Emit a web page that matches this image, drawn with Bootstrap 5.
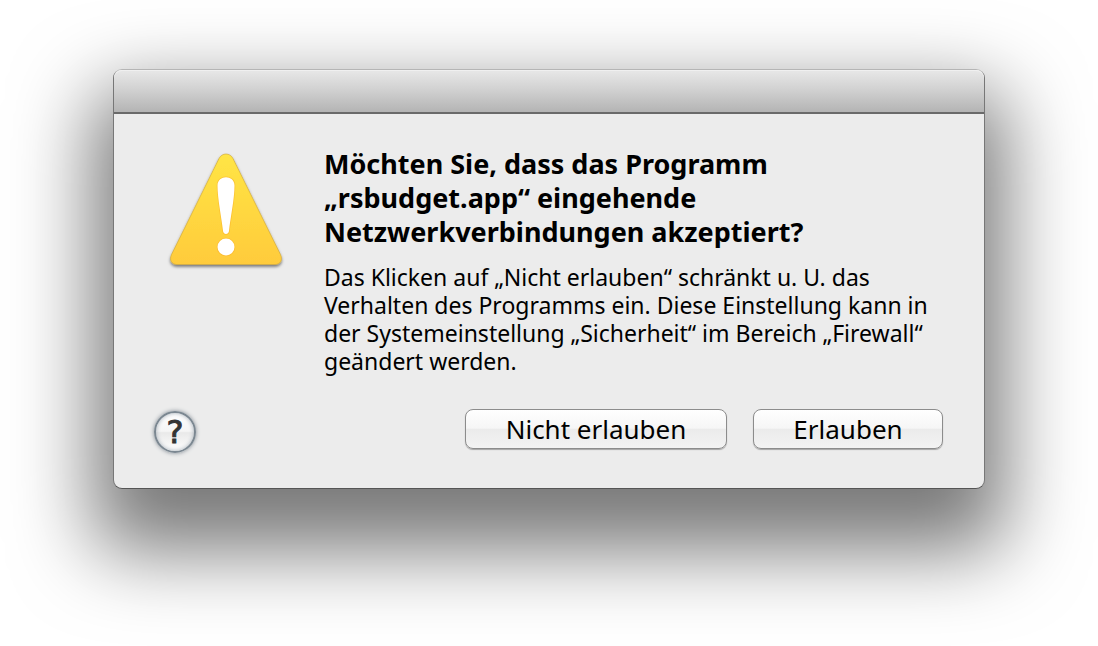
<!DOCTYPE html>
<html lang="de">
<head>
<meta charset="utf-8">
<meta name="viewport" content="width=device-width, initial-scale=1">
<title>Firewall</title>
<link href="https://cdn.jsdelivr.net/npm/bootstrap@5.3.0/dist/css/bootstrap.min.css" rel="stylesheet">
<style>
  body { font-family: "Noto Sans", "Open Sans", sans-serif; color: #000; background: #fff; overflow-x: hidden; }
  .stage { padding: 69px 16px 157px; }
  .alert-window {
    max-width: 872px;
    background: #ececec;
    border: 1px solid #777;
    border-top-color: #b5b5b5;
    border-bottom-color: #555;
    border-radius: 9px;
    box-shadow: 0 42px 80px 20px rgba(0, 0, 0, .53);
  }
  .title-strip {
    height: 44px;
    background: linear-gradient(#e8e8e8, #d2d2d2 45%, #b4b4b4);
    border-bottom: 2px solid #6a6a6a;
    border-radius: 8px 8px 0 0;
    box-shadow: inset 0 1px 0 #f0f0f0;
  }
  .alert-content { padding: 33px 41px 35px 40px; }
  .icon-col { width: 144px; margin-right: 26px; }
  .alert-title { font-size: 27px; line-height: 34px; font-weight: 700; max-width: 500px; margin-bottom: 14px; }
  .alert-text { font-size: 23px; line-height: 28px; margin-bottom: 34px; }
  .push {
    height: 40px;
    padding: 0 36px;
    font-size: 26px;
    line-height: 36px;
    color: #000;
    background: linear-gradient(#fff, #f6f6f6 48%, #ebebeb 50%, #f3f3f3);
    border: 1px solid #8c8c8c;
    border-radius: 8px;
    box-shadow: 0 1px 1px rgba(0, 0, 0, .3);
  }
  .push-wide { min-width: 262px; }
  .push-short { min-width: 190px; }
  .actions { gap: 26px; }
  .help {
    width: 42px;
    height: 42px;
    margin-top: 2px;
    font-family: "DejaVu Sans", sans-serif;
    font-size: 32px;
    line-height: 38px;
    color: #333;
    -webkit-text-stroke: 1px #333;
    background: linear-gradient(#fff, #f5f5f5 48%, #e9e9e9 52%, #fff);
    border: 2px solid #7b8791;
    box-shadow: 0 0 4px #7d8790, inset 0 0 4px #a4aeb8;
  }
</style>
</head>
<body>
<main class="stage">
  <section class="alert-window mx-auto" role="alertdialog" aria-labelledby="title" aria-describedby="text">
    <div class="title-strip"></div>
    <div class="alert-content">
      <div class="d-flex align-items-start">
        <div class="icon-col flex-shrink-0 text-center">
          <svg width="128" height="128" viewBox="0 0 128 128" aria-hidden="true">
            <defs>
              <linearGradient id="yellow" x1="0" y1="0" x2="0" y2="1"><stop offset="0" stop-color="#ffe545"/><stop offset="1" stop-color="#ffcb3b"/></linearGradient>
              <filter id="drop" x="-10%" y="-10%" width="120%" height="120%"><feDropShadow dx="0" dy="2" stdDeviation="1.5" flood-color="#000" flood-opacity=".5"/></filter>
            </defs>
            <path d="M57 11.500C60 5.500 68 5.500 71 11.500L118.500 107.500C121 113 118.500 117.500 113 117.500H15C9.500 117.500 7 113 9.500 107.500Z" fill="url(#yellow)" stroke="#cda536" stroke-width=".6" filter="url(#drop)"/>
            <g fill="#fff" stroke="#f9ad25" stroke-opacity=".55" stroke-width="1.500" paint-order="stroke">
              <path d="M55.500 38.500C55.500 27.500 72.500 27.500 72.500 38.500C72.500 52 68.500 70 67 84C66.500 88 61.500 88 61 84C59.500 70 55.500 52 55.500 38.500Z"/>
              <circle cx="64" cy="100" r="8.500"/>
            </g>
          </svg>
        </div>
        <div>
          <h1 class="alert-title" id="title">Möchten Sie, dass das Programm „rsbudget.app“ eingehende Netzwerkverbindungen akzeptiert?</h1>
          <p class="alert-text" id="text">Das Klicken auf „Nicht erlauben“ schränkt u. U. das Verhalten des Programms ein. Diese Einstellung kann in der Systemeinstellung „Sicherheit“ im Bereich „Firewall“ geändert werden.</p>
        </div>
      </div>
      <div class="d-flex align-items-start justify-content-between">
        <button type="button" class="help rounded-circle p-0" aria-label="Hilfe">?</button>
        <div class="actions d-flex flex-wrap justify-content-end">
          <button type="button" class="push push-wide">Nicht erlauben</button>
          <button type="button" class="push push-short">Erlauben</button>
        </div>
      </div>
    </div>
  </section>
</main>
<script src="https://cdn.jsdelivr.net/npm/bootstrap@5.3.0/dist/js/bootstrap.bundle.min.js"></script>
</body>
</html>
